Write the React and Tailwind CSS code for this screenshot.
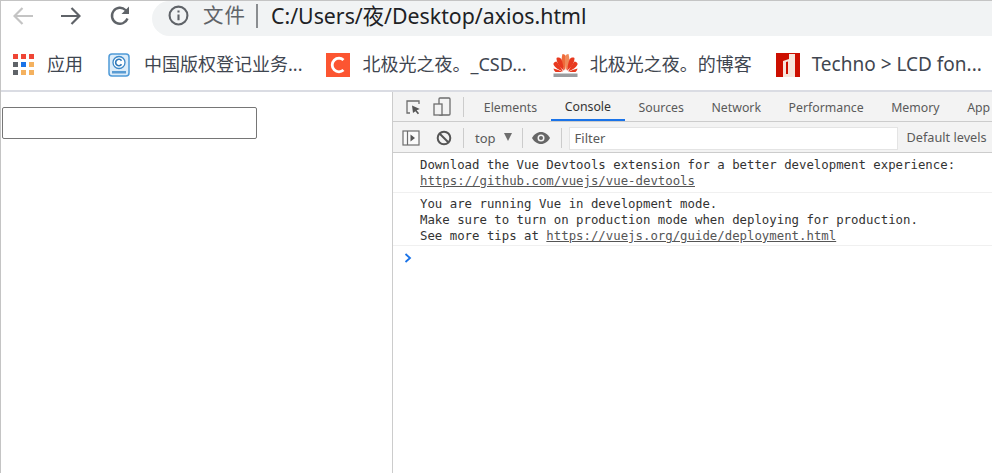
import React from 'react';

const uiFont = "font-['Noto_Sans','Noto_Sans_CJK_SC',sans-serif]";

const Arrow = ({ flip, color }) => (
  <svg width="20" height="18" viewBox="0 0 20 18" fill="none" stroke={color} strokeWidth="2.200" className={flip ? 'rotate-180' : ''}>
    <path d="M0 9h18.500M10.500 1l8 8-8 8" />
  </svg>
);

const AppsIcon = () => {
  const colors = ['#ef4535', '#ef4535', '#ef4535', '#5f6368', '#1a73e8', '#f4b15f', '#5f6368', '#f4b15f', '#f4b15f'];
  return (
    <div className="grid grid-cols-3 gap-[3px] w-[21px]">
      {colors.map((c, i) => (
        <span key={i} className="w-[5px] h-[5px]" style={{ backgroundColor: c }} />
      ))}
    </div>
  );
};

const CpccIcon = () => (
  <svg width="22" height="24" viewBox="0 0 22 24">
    <rect x="1" y="1" width="20" height="22" rx="3" fill="#dcecf9" stroke="#4f9ad8" strokeWidth="1.500" />
    <circle cx="11" cy="9.500" r="6" fill="#fff" stroke="#3c88c8" strokeWidth="1.300" />
    <path d="M13.500 7.700a3.200 3.200 0 1 0 0 3.600" fill="none" stroke="#2f78b8" strokeWidth="1.600" />
    <rect x="4" y="18" width="14" height="2.500" fill="#5a9cd3" />
  </svg>
);

const CsdnIcon = () => (
  <svg width="24" height="24" viewBox="0 0 24 24">
    <rect width="24" height="24" fill="#fc5531" />
    <path d="M17.500 7A7 7 0 0 0 13 5.200a6.800 6.800 0 0 0 0 13.600 7 7 0 0 0 4.500-1.800" fill="none" stroke="#fff" strokeWidth="2.800" />
  </svg>
);

const HuaweiIcon = () => (
  <svg width="25" height="24" viewBox="0 0 25 24">
    <g fill="#e8391f">
      <path d="M12 17.500C9 13 7.500 8 9.500 1c1.800 0 3 1 3.500 3 .3 4-.3 9-1 13.500z" fill="#ef6a3a" />
      <path d="M13 17.500c3-4.500 4.500-9.500 2.500-16.500-1.800 0-3 1-3.500 3-.3 4 .3 9 1 13.500z" fill="#f08a5a" />
      <path d="M11 17.800C6.500 14 3.500 10 3.500 5c1.800-.8 3.800-.3 5 1.300 1.200 3.500 2 7.500 2.500 11.500z" />
      <path d="M14 17.800c4.500-3.800 7.500-7.800 7.500-12.800-1.800-.8-3.800-.3-5 1.300-1.200 3.500-2 7.500-2.500 11.500z" />
      <path d="M10 18.500C6 17 2 15 .3 11c.5-1.500 1.700-2.500 3.200-2.500C6 11.500 8 15 10 18.500z" />
      <path d="M15 18.500c4-1.500 8-3.500 9.700-7.500-.5-1.500-1.700-2.500-3.200-2.500-2.500 3-4.500 6.500-6.500 10z" />
      <path d="M9.500 19H2.500C1.500 18 .8 17 .5 15.500 4 16.500 7 17.500 9.500 19z" />
      <path d="M15.500 19h7c1-.9 1.700-2 2-3.500-3.500 1-6.500 2-9 3.500z" />
    </g>
    <rect x="0.500" y="20.500" width="24" height="3.500" fill="#9a9da0" />
  </svg>
);

const TechnoIcon = () => (
  <svg width="24" height="24" viewBox="0 0 24 24">
    <rect width="24" height="24" fill="#cc0f00" />
    <path d="M7 24V8l6-2V1h6v23z" fill="#f7e5dc" />
    <path d="M10 21V9l2-.6V21z" fill="#cc0f00" />
  </svg>
);

const Bookmark = ({ icon, label, className }) => (
  <div className={`flex items-center h-[24px] ${className}`}>
    {icon}
    <span className="text-[18px] text-[#3f4650] whitespace-nowrap">{label}</span>
  </div>
);

const Tab = ({ label, active }) => (
  <div className={`h-full flex items-center px-[13.800px] pt-[4px] text-[12.300px] whitespace-nowrap ${active ? 'text-[#333] border-b-2 border-[#1a73e8]' : 'text-[#5a5a5a]'}`}>
    {label}
  </div>
);

const Divider = ({ className }) => <div className={`w-px h-[20px] bg-[#ccc] ${className}`} />;

const App = () => {
  return (
    <div className={`w-[992px] h-[473px] overflow-hidden flex flex-col bg-white border-t border-l border-[#c4c4c4] ${uiFont}`}>
      {/* toolbar */}
      <div className="h-[35px] flex items-center shrink-0">
        <div className="w-[151px] flex items-center pl-[12px] pb-[6px] shrink-0">
          <Arrow flip color="#c4c4c4" />
          <div className="w-[28px]" />
          <Arrow color="#5f6368" />
          <div className="w-[28px]" />
          <svg width="22" height="22" viewBox="0 0 22 22" fill="none" stroke="#5f6368" strokeWidth="2.400">
            <path d="M18.500 13.500A8 8 0 1 1 16.500 5L19 7.500" />
            <path d="M20 1.500V9h-7.500z" fill="#5f6368" stroke="none" />
          </svg>
        </div>
        <div className="flex-1 h-full bg-[#f1f3f4] rounded-l-[18px] flex items-center pl-[16px] pb-[6px]">
          <svg width="21" height="21" viewBox="0 0 20 20" fill="none" stroke="#5f6368" strokeWidth="2">
            <circle cx="10" cy="10" r="8.500" />
            <path d="M10 9v5.500M10 5.200v2" />
          </svg>
          <span className="ml-[14px] text-[20.500px] text-[#5f6368] tracking-[1px]">文件</span>
          <div className="ml-[10px] w-[2px] h-[24px] bg-[#8a8d90]" />
          <span className="ml-[13px] text-[21.300px] text-[#202124] whitespace-nowrap">C:/Users/夜/Desktop/axios.html</span>
        </div>
      </div>
      {/* bookmarks */}
      <div className="h-[54px] flex items-center shrink-0 pl-[12px] pt-[3px]">
        <Bookmark icon={<AppsIcon />} label={<span className="ml-[13px]">应用</span>} />
        <Bookmark className="ml-[25px]" icon={<CpccIcon />} label={<span className="ml-[14px]">中国版权登记业务...</span>} />
        <Bookmark className="ml-[24px]" icon={<CsdnIcon />} label={<span className="ml-[12px]">北极光之夜。_CSD...</span>} />
        <Bookmark className="ml-[26px]" icon={<HuaweiIcon />} label={<span className="ml-[12px]">北极光之夜。的博客</span>} />
        <Bookmark className="ml-[24px]" icon={<TechnoIcon />} label={<span className="ml-[12px] text-[19px]">Techno &gt; LCD fon...</span>} />
      </div>
      <div className="h-[2px] bg-[#dadce3] shrink-0" />
      {/* content */}
      <div className="flex-1 flex min-h-0">
        <div className="w-[391px] shrink-0 pt-[15px] pl-[1px]">
          <input type="text" className="block w-[255px] h-[32px] border border-[#767676] rounded-[2px] bg-white" />
        </div>
        <div className="flex-1 min-w-0 border-l border-[#ccc] flex flex-col overflow-hidden">
          {/* tab bar */}
          <div className="h-[30px] bg-[#f3f3f3] border-b border-[#ccc] flex items-center shrink-0 overflow-hidden">
            <div className="w-[12px] shrink-0" />
            <svg width="16" height="16" viewBox="0 0 16 16" fill="none" className="shrink-0">
              <path d="M5 14H2V2h12v3" stroke="#6e6e6e" strokeWidth="1.300" />
              <path d="M7 6.500 14.800 10l-3.200 1.200 2.500 3-1.300 1-2.400-3L8 14z" fill="#555" />
            </svg>
            <svg width="18" height="20" viewBox="0 0 18 20" fill="none" stroke="#6e6e6e" strokeWidth="1.300" className="ml-[12px] shrink-0">
              <rect x="6" y="1" width="11" height="17" rx="1" />
              <rect x="1" y="7" width="8" height="11" fill="#f3f3f3" />
            </svg>
            <Divider className="ml-[12px] shrink-0" />
            <div className="w-[6px] shrink-0" />
            <div className="flex items-center h-full shrink-0">
              <Tab label="Elements" />
              <Tab label="Console" active />
              <Tab label="Sources" />
              <Tab label="Network" />
              <Tab label="Performance" />
              <Tab label="Memory" />
              <Tab label="App" />
            </div>
          </div>
          {/* console toolbar */}
          <div className="h-[31px] bg-[#f3f3f3] border-b border-[#ccc] flex items-center shrink-0 overflow-hidden pt-[2px]">
            <svg width="18" height="16" viewBox="0 0 18 16" fill="none" className="ml-[9px] shrink-0">
              <rect x="1" y="1" width="16" height="14" stroke="#6e6e6e" strokeWidth="1.200" fill="#fafafa" />
              <path d="M5.500 1v14" stroke="#6e6e6e" strokeWidth="1.200" />
              <path d="M8.500 4.500 13 8l-4.500 3.500z" fill="#555" />
            </svg>
            <svg width="16" height="16" viewBox="0 0 16 16" fill="none" stroke="#555" strokeWidth="2" className="ml-[16px] shrink-0">
              <circle cx="8" cy="8" r="6.300" />
              <path d="M3.500 3.500l9 9" />
            </svg>
            <Divider className="ml-[11px] shrink-0" />
            <span className="ml-[11px] pt-[2px] text-[13px] text-[#5a5a5a]">top</span>
            <svg width="10" height="8" viewBox="0 0 10 8" className="ml-[7px] mb-[3px] shrink-0">
              <path d="M1 0h8L5 8z" fill="#6e6e6e" />
            </svg>
            <Divider className="ml-[9px] shrink-0" />
            <svg width="20" height="14" viewBox="0 0 20 14" className="ml-[8px] shrink-0">
              <path d="M1 7c2-3.600 5.200-6 9-6s7 2.400 9 6c-2 3.600-5.200 6-9 6S3 10.600 1 7z" fill="#666" />
              <circle cx="10" cy="7" r="3.500" fill="#f3f3f3" />
              <circle cx="10" cy="7" r="2" fill="#666" />
            </svg>
            <Divider className="ml-[10px] shrink-0" />
            <div className="ml-[7px] w-[329px] h-[23px] bg-white border border-[#e4e4e4] flex items-center pl-[5px] pt-[2px] text-[13px] text-[#5a5a5a] shrink-0">Filter</div>
            <span className="ml-[9px] text-[12.700px] text-[#5a5a5a] whitespace-nowrap">Default levels</span>
          </div>
          {/* console output */}
          <div className="flex-1 bg-white font-['DejaVu_Sans_Mono',monospace] text-[12.350px] leading-[16px] text-[#333]">
            <div className="pl-[27px] pt-[4px] pb-[3px] border-b border-[#f0f0f0] whitespace-pre">
              <div>Download the Vue Devtools extension for a better development experience:</div>
              <div className="underline text-[#555]">https://github.com/vuejs/vue-devtools</div>
            </div>
            <div className="pl-[27px] pt-[3px] pb-[1px] border-b border-[#f0f0f0] whitespace-pre">
              <div>You are running Vue in development mode.</div>
              <div>Make sure to turn on production mode when deploying for production.</div>
              <div>See more tips at <span className="underline text-[#555]">https://vuejs.org/guide/deployment.html</span></div>
            </div>
            <div className="pl-[11px] pt-[7px]">
              <svg width="8" height="10" viewBox="0 0 8 10" fill="none" stroke="#1a73e8" strokeWidth="1.800">
                <path d="M1.500 1 6 5l-4.500 4" />
              </svg>
            </div>
          </div>
        </div>
      </div>
    </div>
  );
};

export default App;
